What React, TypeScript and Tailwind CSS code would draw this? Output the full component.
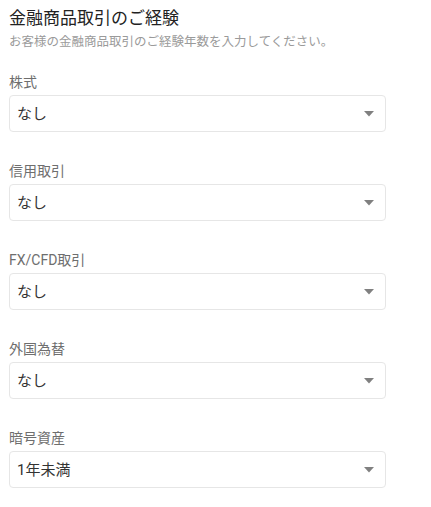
import React from 'react';

const fields = [
  { label: '株式', value: 'なし' },
  { label: '信用取引', value: 'なし' },
  { label: 'FX/CFD取引', value: 'なし' },
  { label: '外国為替', value: 'なし' },
  { label: '暗号資産', value: '1年未満' },
];

function SelectField({ label, value }: { label: string; value: string }) {
  return (
    <div className="mb-[29px]">
      <div className="text-[14px] leading-[20px] text-[#6e6e6e]">{label}</div>
      <div className="mt-[3px] flex h-[37px] w-[377px] items-center justify-between rounded-[4px] border border-[#e6e6e6] bg-white pl-[7px] pr-[11px]">
        <span className="text-[15px] leading-[20px] text-[#333]">{value}</span>
        <svg width="10" height="6" viewBox="0 0 10 6">
          <path d="M0 0 L10 0 L5 5.5 Z" fill="#808080" />
        </svg>
      </div>
    </div>
  );
}

export default function App() {
  return (
    <div
      className="min-h-screen bg-white pl-[9px] pt-[6px]"
      style={{ fontFamily: "Roboto, 'Noto Sans CJK JP', sans-serif" }}
    >
      <h1 className="text-[17px] leading-[24px] font-normal text-[#222]">金融商品取引のご経験</h1>
      <p className="mt-[4px] text-[12.5px] leading-[16px] text-[#9a9a9a]">
        お客様の金融商品取引のご経験年数を入力してください。
      </p>
      <div className="mt-[22px]">
        {fields.map((f) => (
          <SelectField key={f.label} label={f.label} value={f.value} />
        ))}
      </div>
    </div>
  );
}
